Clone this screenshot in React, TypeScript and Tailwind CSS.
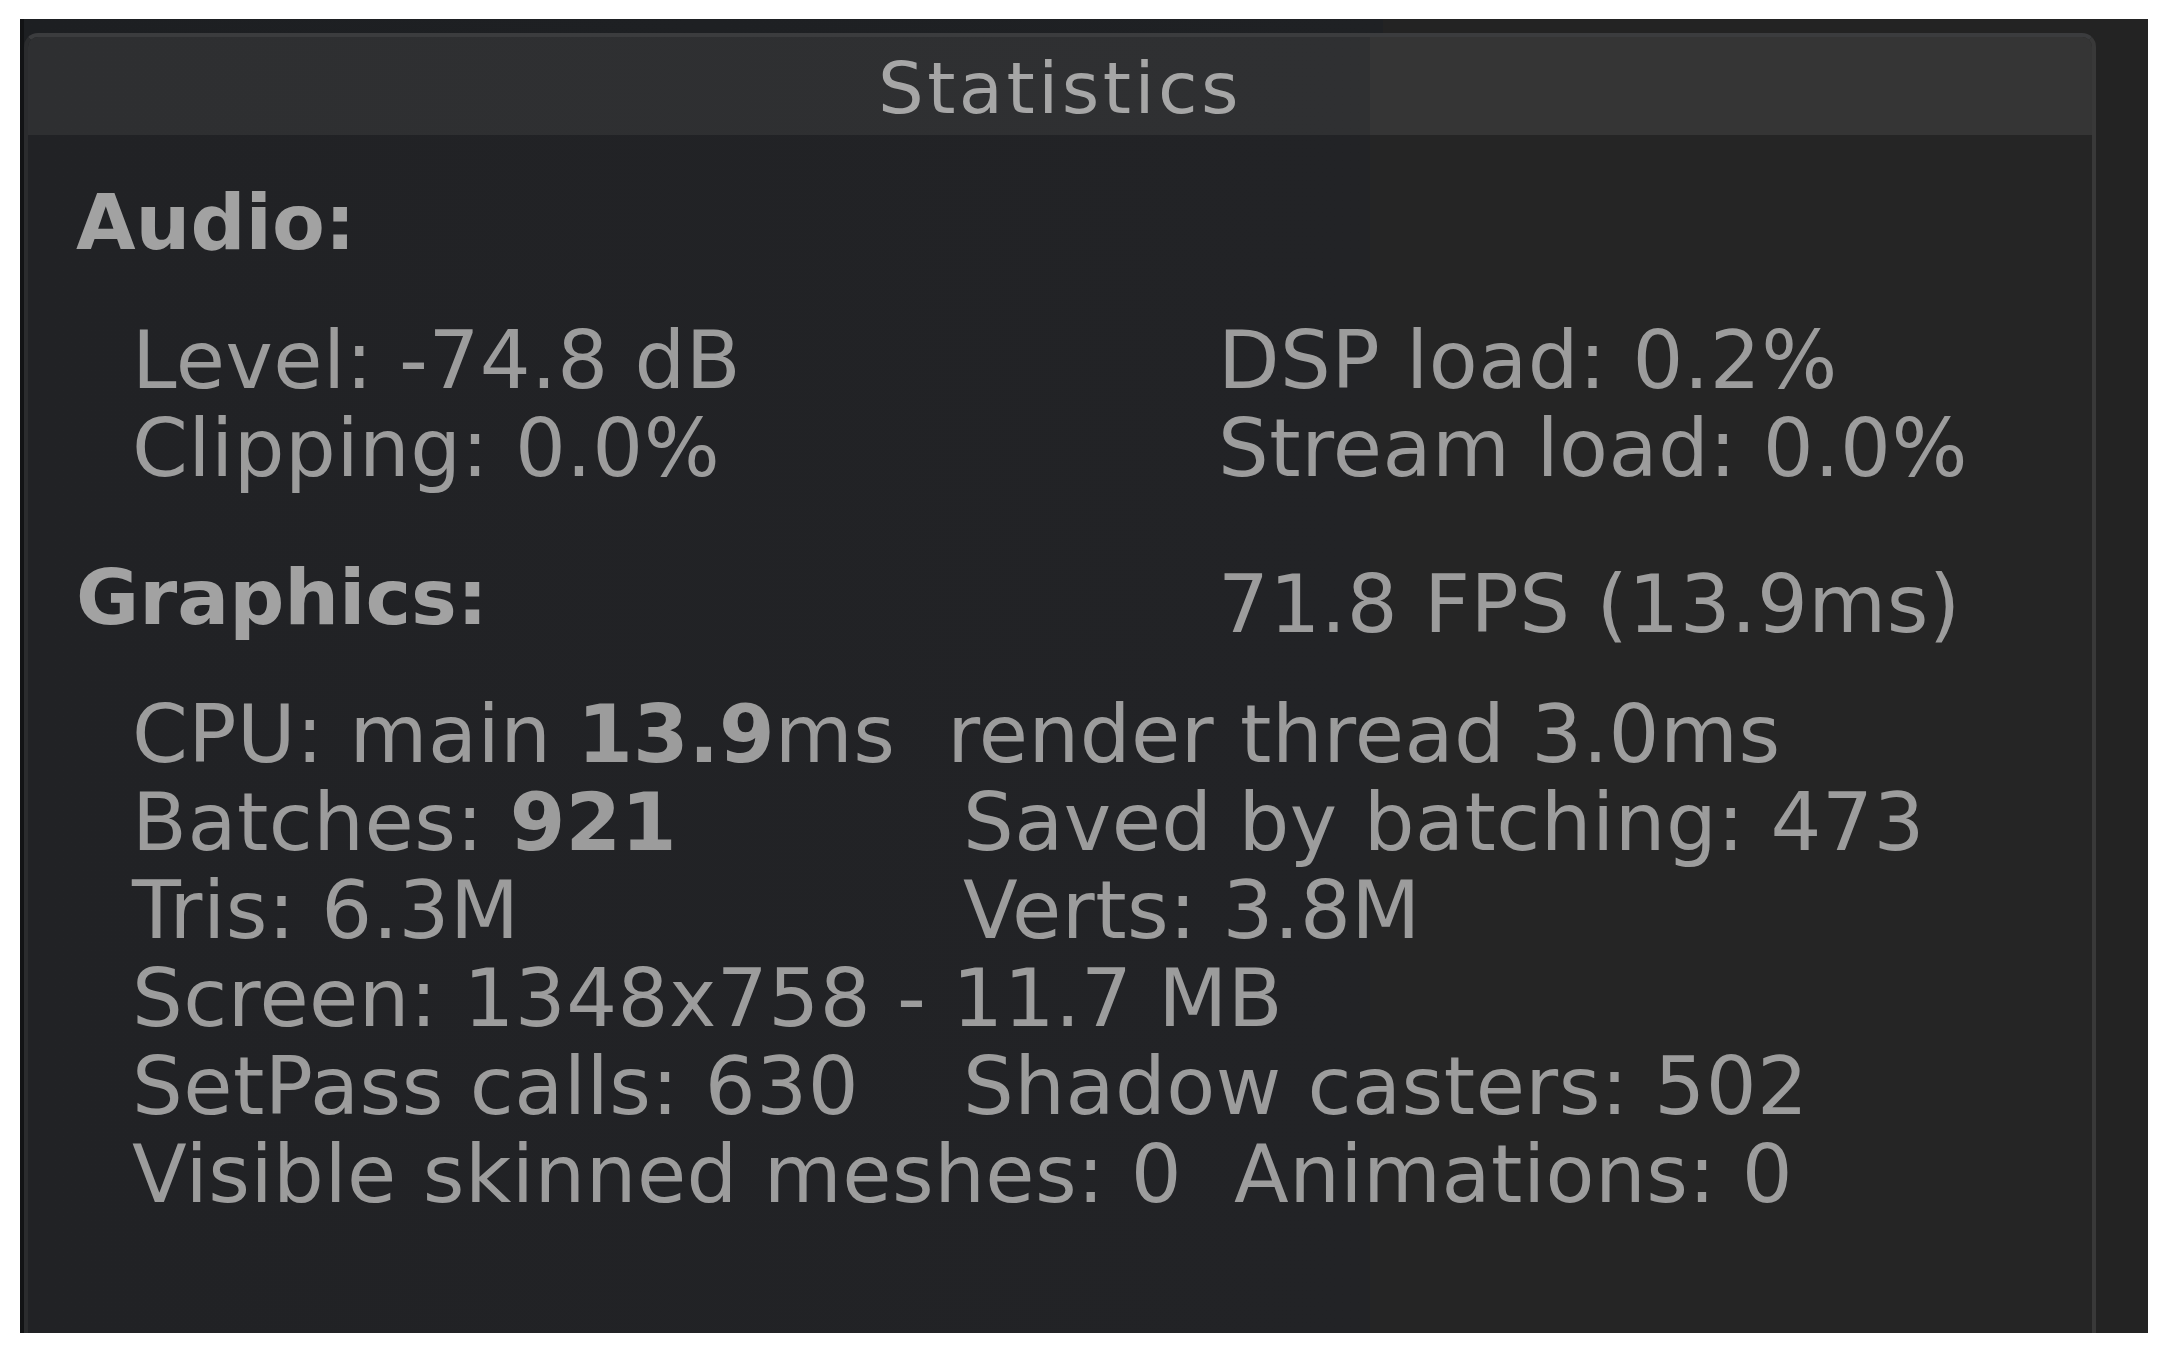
import React from 'react'

const font = "font-['DejaVu_Sans',sans-serif]"

function Line({ children }: { children: React.ReactNode }) {
  return <div className="h-[88px] whitespace-pre text-[80px] leading-[88px] tracking-[0.5px]">{children}</div>
}

function TabLine({ left, right, col }: { left: React.ReactNode; right: React.ReactNode; col: string }) {
  return (
    <div className={`grid ${col} h-[88px] whitespace-pre text-[80px] leading-[88px] tracking-[0.5px]`}>
      <span>{left}</span>
      <span>{right}</span>
    </div>
  )
}

function B({ children }: { children: React.ReactNode }) {
  return <span className="font-bold tracking-[0px]">{children}</span>
}

export default function App() {
  return (
    <div className={`w-[2174px] h-[1371px] bg-white overflow-hidden ${font}`}>
      <div className="ml-[20px] mt-[19px] w-[2128px] h-[1314px] border-l-4 border-[#121315] pt-[14px] pr-[52px] bg-[linear-gradient(to_right,#1d1f22_0%,#1f2124_64%,#232323_64%,#232323_100%)]">
        <div className="h-full flex flex-col rounded-t-[14px] border-t-4 border-x-4 border-t-[#3b3c3e] border-l-[#2b2c2e] border-r-[#393939] overflow-hidden">
          <div className="h-[98px] shrink-0 pt-[3px] text-center text-[72px] leading-[96px] tracking-[3.5px] text-[#a6a6a6] bg-[linear-gradient(to_right,#2e2f31_0%,#2f3032_65%,#353535_65%,#353535_100%)]">
            Statistics
          </div>
          <div className="flex-1 pl-[48px] pt-[44px] text-[#9c9c9c] bg-[linear-gradient(to_right,#212225_0%,#222326_65%,#252525_65%,#252525_100%)]">
            <div className="h-[88px] text-[77px] leading-[88px] font-bold text-[#a2a2a2]">Audio:</div>

            <div className="mt-[50px] pl-[56px]">
              <TabLine col="grid-cols-[1086px_1fr]" left="Level: -74.8 dB" right="DSP load: 0.2%" />
              <TabLine col="grid-cols-[1086px_1fr]" left="Clipping: 0.0%" right="Stream load: 0.0%" />
            </div>

            <div className="mt-[61px] grid grid-cols-[1142px_1fr] items-start">
              <div className="h-[88px] text-[77px] leading-[88px] font-bold text-[#a2a2a2]">Graphics:</div>
              <div className="pt-[7px]">
                <Line>71.8 FPS (13.9ms)</Line>
              </div>
            </div>

            <div className="mt-[42px] pl-[56px]">
              <Line>
                CPU: main <B>13.9</B>ms  render thread 3.0ms
              </Line>
              <TabLine col="grid-cols-[831px_1fr]" left={<>Batches: <B>921</B></>} right="Saved by batching: 473" />
              <TabLine col="grid-cols-[831px_1fr]" left="Tris: 6.3M" right="Verts: 3.8M" />
              <Line>Screen: 1348x758 - 11.7 MB</Line>
              <TabLine col="grid-cols-[831px_1fr]" left="SetPass calls: 630" right="Shadow casters: 502" />
              <Line>Visible skinned meshes: 0  Animations: 0</Line>
            </div>
          </div>
        </div>
      </div>
    </div>
  )
}
